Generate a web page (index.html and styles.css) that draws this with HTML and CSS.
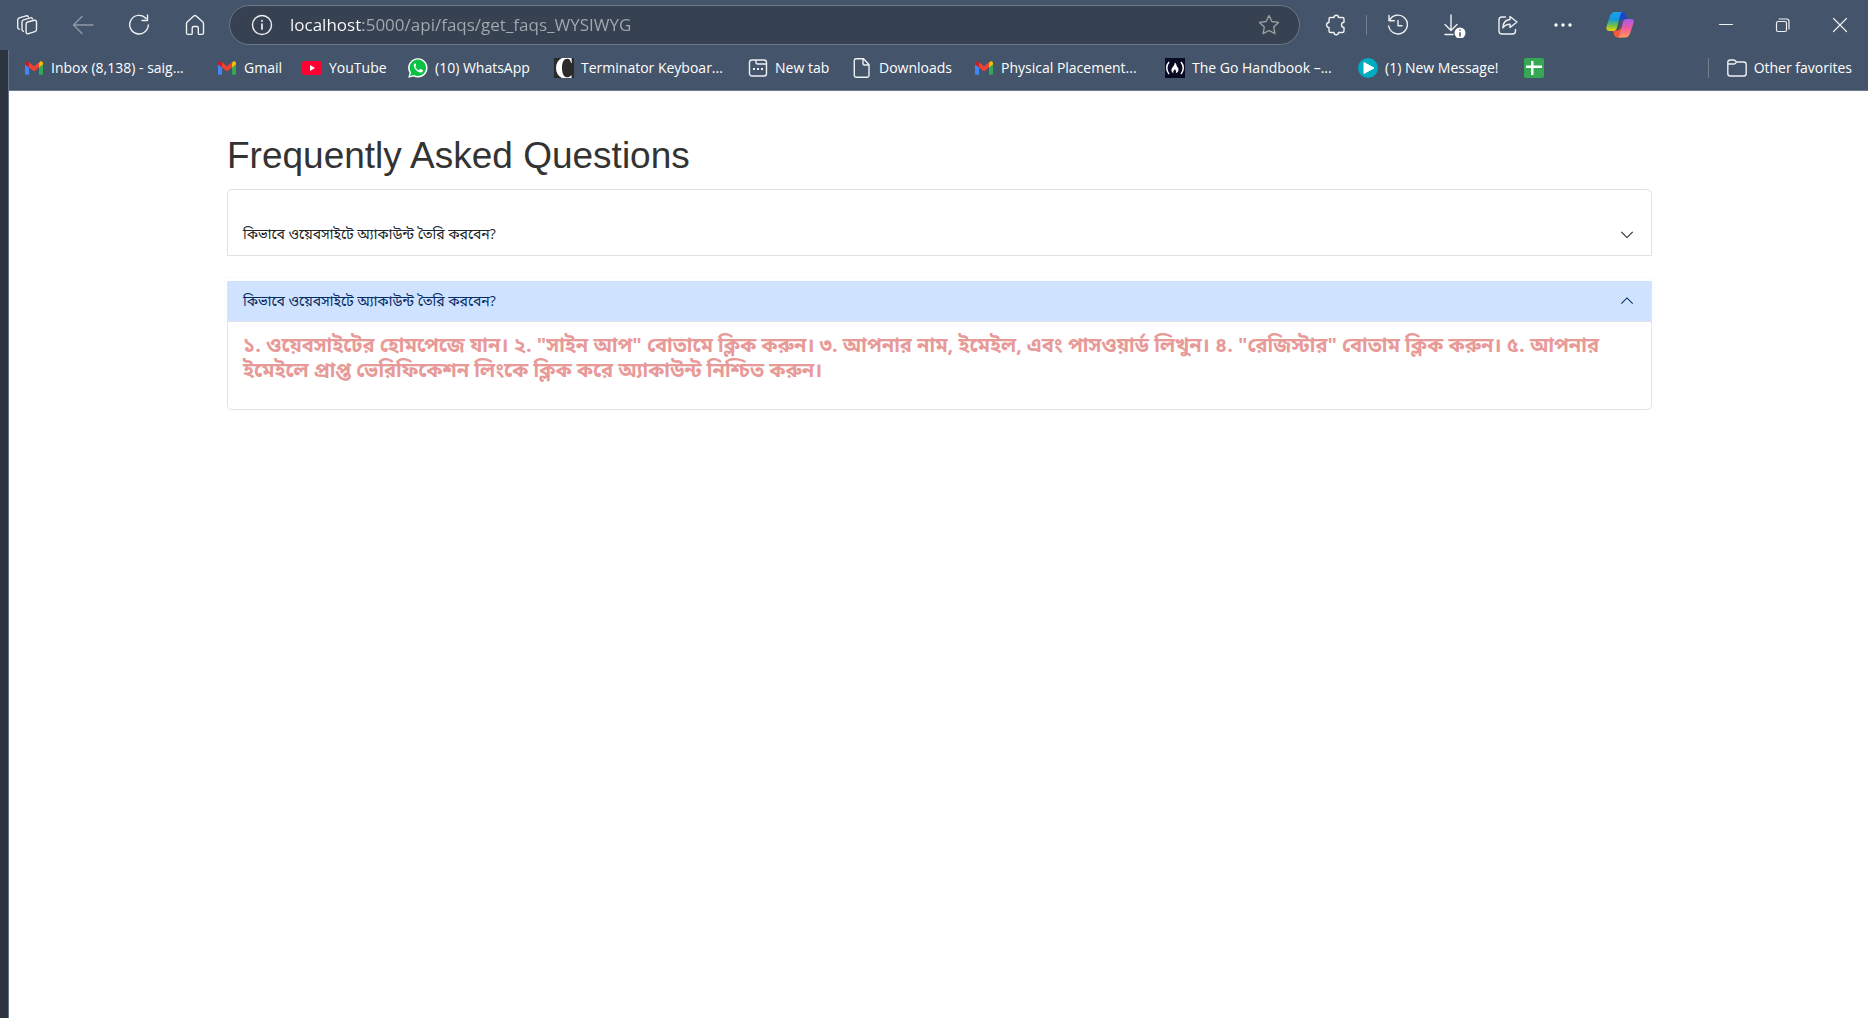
FILE: index.html
```html
<!DOCTYPE html>
<html lang="en">
<head>
<meta charset="utf-8">
<meta name="viewport" content="width=device-width, initial-scale=1">
<title>Frequently Asked Questions</title>
<link rel="stylesheet" href="styles.css">
</head>
<body>
<svg class="defs" aria-hidden="true">
  <symbol id="gmail" viewBox="0 0 20 20">
    <path fill="#4285f4" d="M1 6v9.500c0 .8.500 1.300 1.300 1.300H5V9z"/>
    <path fill="#34a853" d="M19 6v9.500c0 .8-.500 1.300-1.300 1.300H15V9z"/>
    <path fill="#fbbc04" d="M15 5.300V9.500l4-3V5.200c0-1.900-2-2.500-3.200-1.500z"/>
    <path fill="#c5221f" d="M5 5.300V9.500l-4-3V5.200c0-1.900 2-2.500 3.200-1.500z"/>
    <path fill="#ea4335" d="M5 9.500V4.300l5 3.900 5-3.900v5.200l-5 3.900z"/>
  </symbol>
</svg>

<header class="toolbar">
  <nav class="nav" aria-label="Navigation">
    <button class="tool" aria-label="Workspaces"><svg width="24" height="24" viewBox="0 0 24 24"><path d="m12.500 9 6.800-1.700c1.200-.3 2.200.5 2.200 1.700v7.600c0 1-.6 1.800-1.600 2.100l-6.500 2c-1.200.4-2.300-.5-2.300-1.700v-8c0-1 .5-1.800 1.400-2zM8.500 18.300C7.500 18 7 17.500 7 16.500V9c0-1 .6-1.900 1.600-2.200l6.800-1.900c1-.3 1.900.2 2.200 1M4.300 16.300c-1-.3-1.600-.9-1.600-1.900V7c0-1 .6-1.900 1.600-2.200L11 2.900c1-.3 1.900.1 2.300.9"/></svg></button>
    <button class="tool dim" aria-label="Back"><svg width="22" height="22" viewBox="0 0 22 22"><path d="M21 11H2M10 2.500 1.500 11l8.500 8.500"/></svg></button>
    <button class="tool" aria-label="Refresh"><svg width="22" height="22" viewBox="0 0 22 22"><path d="M18 4.500a9.300 9.300 0 1 0 2.300 6.500M19.500 1v5.500h-5.500"/></svg></button>
    <button class="tool" aria-label="Home"><svg width="22" height="22" viewBox="0 0 22 22"><path d="M2.500 9.500c0-.6.300-1.100.7-1.500l6.600-6c.7-.6 1.700-.6 2.400 0l6.600 6c.4.400.7.900.7 1.500V19c0 .8-.6 1.400-1.400 1.400h-2.800c-.6 0-1-.4-1-1V14c0-.9-.6-1.500-1.500-1.500H9.700c-.9 0-1.500.6-1.500 1.500v5.400c0 .6-.4 1-1 1H3.900c-.8 0-1.400-.6-1.400-1.400z"/></svg></button>
  </nav>
  <div class="address">
    <svg width="22" height="22" viewBox="0 0 22 22" aria-hidden="true"><circle cx="11" cy="11" r="9.500"/><path stroke-width="1.700" d="M11 10v5M11 6.500v.6"/></svg>
    <input class="url" type="text" aria-label="Address" value="localhost:5000/api/faqs/get_faqs_WYSIWYG">
    <button class="star" aria-label="Add to favorites"><svg width="22" height="22" viewBox="0 0 22 22"><path d="m11 1.500 2.900 6 6.600.9-4.800 4.600 1.200 6.700-5.900-3.200-5.900 3.200L6.300 13 1.500 8.400l6.600-.9z"/></svg></button>
  </div>
  <div class="actions">
    <button class="tool" aria-label="Extensions"><svg width="22" height="22" viewBox="0 0 22 22"><path d="M5.500 3.500H9c0-3 4.500-3 4.500 0h4c.9 0 1.500.6 1.500 1.500v3.200c-3.300 0-3.300 5.300 0 5.300V17c0 .9-.6 1.500-1.500 1.500h-4c0 3-4.500 3-4.500 0H5.500C4.600 18.500 4 17.900 4 17v-3.500c-3.200 0-3.200-5 0-5V5c0-.9.600-1.500 1.500-1.500z"/></svg></button>
    <span class="rule"></span>
    <button class="tool" aria-label="History"><svg width="22" height="22" viewBox="0 0 22 22"><path d="M2.500 6.500A9.400 9.400 0 1 1 1.700 12M2 1.500v5.300h5.300M11 6.500v5.300h4"/></svg></button>
    <button class="tool" aria-label="Downloads"><svg width="26" height="26" viewBox="0 0 26 26"><path d="M11 3v15.500M5 12.500l6 6 6-6M5 22.500h8"/><circle cx="20" cy="21" r="5.500" fill="#fff" stroke="none"/><path stroke="#44546a" stroke-width="1.500" d="M20 20.800V24M20 18v.3"/></svg></button>
    <button class="tool" aria-label="Share"><svg width="22" height="22" viewBox="0 0 22 22"><path d="M8.500 3H5C3.300 3 2 4.300 2 6v11c0 1.700 1.300 3 3 3h10.500c1.700 0 3-1.300 3-3v-1.500M13 2.500l7 5.500-7 5.500v-3.200c-3.500 0-5.500 1-7.200 3.700C6 9 8.500 5.800 13 5.500z"/></svg></button>
    <button class="tool" aria-label="More"><svg width="22" height="22" viewBox="0 0 22 22"><g fill="#fff" stroke="none"><circle cx="4" cy="11" r="1.700"/><circle cx="11" cy="11" r="1.700"/><circle cx="18" cy="11" r="1.700"/></g></svg></button>
    <button class="tool copilot" aria-label="Copilot"><svg width="28" height="28" viewBox="0 0 28 28">
      <defs>
        <linearGradient id="cpa" x1="0" y1="0" x2="0" y2="1"><stop offset="0" stop-color="#1ba0f5"/><stop offset=".4" stop-color="#1499d8"/><stop offset=".7" stop-color="#6cc04a"/><stop offset="1" stop-color="#f5d000"/></linearGradient>
        <linearGradient id="cpb" x1="0" y1="0" x2="0" y2="1"><stop offset="0" stop-color="#a45bf0"/><stop offset=".5" stop-color="#ee5a9c"/><stop offset="1" stop-color="#ff9a5c"/></linearGradient>
      </defs>
      <path fill="#1448d0" stroke="none" d="M12 1h4.500c2 0 2.800 1.200 3.300 3l1.200 4H17c-2 0-3 1-3.500 3z"/>
      <path fill="#f4593a" stroke="none" d="M16 26.500h-4.500c-2 0-2.800-1-3.300-2.800L7 19.500h4c2 0 3-1 3.500-3z"/>
      <path fill="url(#cpa)" stroke="none" d="M17 1H9C6 1 4.500 3 3.600 6L.5 15.500C-.300 18.500 1 20 3.500 20H7c2.500 0 3.500-1.500 4.200-4L14 5c.6-2.300 1-4 3-4z"/>
      <path fill="url(#cpb)" stroke="none" d="M11.500 26.500H19c3 0 4.500-2 5.400-5l3.100-9.500c.8-3-.5-4-3-4H21c-2.500 0-3.500 1-4.200 3.500L14 22.500c-.6 2.300-1 4-2.500 4z"/>
    </svg></button>
  </div>
  <div class="window">
    <button class="tool" aria-label="Minimize"><svg width="16" height="16" viewBox="0 0 16 16"><path d="M1.500 7.500h13"/></svg></button>
    <button class="tool" aria-label="Restore"><svg width="16" height="16" viewBox="0 0 16 16"><rect x="1.500" y="4.500" width="10" height="10" rx="1.500"/><path d="M4 2h7.500C13 2 14 3 14 4.500V12"/></svg></button>
    <button class="tool" aria-label="Close"><svg width="16" height="16" viewBox="0 0 16 16"><path d="m1.500 1.500 13 13M14.500 1.500l-13 13"/></svg></button>
  </div>
</header>

<div class="frame">
  <div class="pane">
    <nav class="bookmarks" aria-label="Favorites">
      <a href="#"><svg><use href="#gmail"/></svg>Inbox (8,138) - saig...</a>
      <a href="#"><svg><use href="#gmail"/></svg>Gmail</a>
      <a href="#"><svg viewBox="0 0 20 20"><rect y="3" width="20" height="14" rx="3" fill="#f03"/><path fill="#fff" d="m8 7 5 3-5 3z"/></svg>YouTube</a>
      <a href="#"><svg viewBox="0 0 20 20"><path fill="#fff" d="M.2 19.800 1.600 15A9.700 9.700 0 1 1 5.400 18.500z"/><path fill="#09c143" d="m2 18 1.100-3.600A8.200 8.200 0 1 1 6 17z"/><path fill="#fff" d="M7.100 5.300c-.8.300-1.400 1.300-1.300 2.400.3 3 3.400 6.200 6.700 6.800 1.200.1 2.200-.6 2.500-1.500.1-.6 0-.8-.3-1l-2-1c-.4-.2-.6 0-.8.300-.6.8-.8 1-1.300.7-1.500-.7-2.500-1.700-3.200-3-.2-.4.600-.9.800-1.400.1-.3-.6-1.700-.8-2.100-.1-.2-.2-.2-.3-.2z"/></svg>(10) WhatsApp</a>
      <a href="#"><svg viewBox="0 0 20 20"><path fill="#2b2b2b" d="M0 0h20v20H0z"/><path fill="#fff" d="M17.500 0H8C4 2 2 5.500 2 10s2 8 6 10h9.500v-3c-1.300 1.600-2.700 2.300-4 2.300C10 19.300 8 16 8 10S10 .8 13.500.8c1.800 0 3 1.500 3.500 4.200h.8z"/></svg>Terminator Keyboar...</a>
      <a href="#"><svg class="line" viewBox="0 0 20 20"><rect x="1.500" y="2" width="17" height="16" rx="2.500"/><path d="M8 2v2.500C8 5.500 8.500 6 9.500 6h9"/><path stroke-width="2" d="M5 11h2M9 11h2M13 11h2"/></svg>New tab</a>
      <a href="#"><svg class="line" viewBox="0 0 20 20"><path d="M4 .8h7.500L17 6.500v11c0 1-.7 1.700-1.700 1.700H4c-1 0-1.700-.7-1.700-1.700v-15C2.300 1.500 3 .8 4 .8zM11 1v4.500c0 .9.600 1.500 1.500 1.500H17"/></svg>Downloads</a>
      <a href="#"><svg><use href="#gmail"/></svg>Physical Placement...</a>
      <a href="#"><svg viewBox="0 0 20 20"><path fill="#0a0a23" d="M0 0h20v20H0z"/><path fill="none" stroke="#fff" stroke-width="1.500" d="M4 4c-3 3.500-3 8.500 0 12M16 4c3 3.500 3 8.500 0 12"/><path fill="#fff" d="M9.500 4.500c1 3-3.500 5-3 8 .2 1.500 1 2.300 2 2.800-.8-1.800.3-3 1.500-4.300.2 1 .7 1.200 1 2 .3.900.2 1.600-.3 2.300 1.600-.5 2.900-1.800 2.800-3.800-.1-2.200-1-2-1.500-3C11.400 7 11.500 5.500 9.500 4.500z"/></svg>The Go Handbook –...</a>
      <a href="#"><svg viewBox="0 0 20 20"><circle cx="10" cy="10" r="10" fill="#00acc1"/><path fill="#fff" stroke="#fff" stroke-linejoin="round" d="M6 4.500v11l10-5.500z"/></svg>(1) New Message!</a>
      <a href="#" aria-label="Sheet"><svg viewBox="0 0 20 20"><rect width="20" height="20" rx="2" fill="#34a853"/><path fill="#fff" d="M7 3h2.500v4.500H18V10H9.500v7H7v-7H2V7.500h5z"/></svg></a>
      <a href="#" class="other"><svg class="line" viewBox="0 0 20 20"><path d="M.8 4.500c0-1.500 1-2.500 2.500-2.500h3.400c.6 0 1.100.3 1.500.7L9.500 4h7.200c1.500 0 2.500 1 2.500 2.500v9c0 1.500-1 2.500-2.500 2.500H3.300C1.800 18 .8 17 .8 15.500zM1 6h6c.5 0 .9-.3 1.200-.6L9.500 4"/></svg>Other favorites</a>
    </nav>
    <main class="page">
      <div class="container">
        <h1>Frequently Asked Questions</h1>
        <div class="accordion" lang="bn">
          <section class="item">
            <h2><button class="question" aria-expanded="false">কিভাবে ওয়েবসাইটে অ্যাকাউন্ট তৈরি করবেন?<svg width="14" height="14" viewBox="0 0 16 16"><path d="M1.500 4.500 8 11l6.500-6.500"/></svg></button></h2>
          </section>
          <section class="item open">
            <h2><button class="question" aria-expanded="true">কিভাবে ওয়েবসাইটে অ্যাকাউন্ট তৈরি করবেন?<svg width="14" height="14" viewBox="0 0 16 16"><path d="M1.500 11 8 4.500l6.500 6.500"/></svg></button></h2>
            <div class="answer"><strong>১. ওয়েবসাইটের হোমপেজে যান। ২. "সাইন আপ" বোতামে ক্লিক করুন। ৩. আপনার নাম, ইমেইল, এবং পাসওয়ার্ড লিখুন। ৪. "রেজিস্টার" বোতাম ক্লিক করুন। ৫. আপনার ইমেইলে প্রাপ্ত ভেরিফিকেশন লিংকে ক্লিক করে অ্যাকাউন্ট নিশ্চিত করুন।</strong></div>
          </section>
        </div>
      </div>
    </main>
  </div>
</div>
</body>
</html>
```
FILE: styles.css
```css
* { box-sizing: border-box; }

body {
  margin: 0;
  min-height: 100vh;
  display: flex;
  flex-direction: column;
  background: #2b343f;
  font-family: "Open Sans", "Noto Sans", sans-serif;
}

button {
  margin: 0;
  padding: 0;
  border: 0;
  background: none;
  color: inherit;
  font: inherit;
}

.defs { display: none; }

/* Browser toolbar */
.toolbar {
  display: flex;
  align-items: center;
  height: 50px;
  background: #44546a;
}

.toolbar svg {
  fill: none;
  stroke: #eef0f3;
  stroke-width: 1.4;
  stroke-linecap: round;
  stroke-linejoin: round;
}

.nav { display: flex; gap: 2px; margin-right: 7px; }

.tool {
  display: flex;
  align-items: center;
  justify-content: center;
  width: 54px;
  height: 40px;
}

.toolbar .dim svg { stroke: #8f99a6; }

.address {
  display: flex;
  flex: 1;
  align-items: center;
  gap: 17px;
  height: 40px;
  padding: 0 19px 0 21px;
  border: 1px solid #6c7888;
  border-radius: 20px;
  background: #364252;
}

.url {
  flex: 1;
  min-width: 0;
  padding: 0;
  border: 0;
  outline: 0;
  background: linear-gradient(to right, #fff 73px, #a4a9b0 73px);
  background-clip: text;
  -webkit-background-clip: text;
  color: transparent;
  font: 17px/24px "Open Sans", "Noto Sans", sans-serif;
}

.star { display: flex; }
.toolbar .star svg { stroke: #9c9d9f; }

.actions { display: flex; align-items: center; margin: 0 47px 0 8px; }
.actions .tool { width: 55px; }
.actions .copilot { width: 60px; }

.rule { width: 1px; height: 20px; margin: 0 3px; background: #75808e; }

.window { display: flex; }
.window .tool { width: 57px; }
.window svg { stroke-width: 1.2; }

/* Window frame */
.frame {
  display: flex;
  flex: 1;
  padding-left: 8px;
}

.pane {
  display: flex;
  flex: 1;
  flex-direction: column;
  min-width: 0;
  border-left: 1px solid #65738a;
  background: #fff;
}

.bookmarks {
  display: grid;
  grid-template-columns: 193px 85px 106px 146px 194px 104px 122px 191px 193px 166px 20px 1fr;
  align-items: center;
  height: 41px;
  padding: 0 16px 5px 15px;
  border-bottom: 1px solid #6b7889;
  background: #44546a;
}

.bookmarks a {
  display: flex;
  align-items: center;
  gap: 7px;
  color: #fff;
  font-size: 14px;
  line-height: 20px;
  text-decoration: none;
  white-space: nowrap;
}

.bookmarks svg { flex: none; width: 20px; height: 20px; }

.bookmarks .line {
  fill: none;
  stroke: #eef0f3;
  stroke-width: 1.4;
}

.bookmarks .other {
  justify-self: end;
  padding-left: 18px;
  border-left: 1px solid #75808e;
}

/* FAQ page */
.page {
  flex: 1;
  padding: 40px 0 0 2px;
}

.container {
  width: 77%;
  max-width: 1425px;
  margin: 0 auto;
}

h1 {
  margin: 0 0 8px;
  color: #333;
  font: 400 37px/50px "Liberation Sans", Arial, sans-serif;
}

.accordion { font-family: "Open Sans", "Noto Sans Bengali", sans-serif; }

.item {
  border: 1px solid #dee2e6;
}

.item h2 { margin: 0; font-size: 14px; font-weight: 400; }
.item:first-child { padding-top: 24px; border-radius: 5px 5px 0 0; }

.item:last-child {
  margin-top: 25px;
  border-top: 0;
  border-radius: 0 0 5px 5px;
}

.question {
  display: flex;
  align-items: center;
  justify-content: space-between;
  width: 100%;
  height: 41px;
  padding: 0 17px 0 15px;
  color: #212529;
  text-align: left;
}

.question svg { fill: none; stroke: currentColor; stroke-width: 1.2; }

.open .question {
  background: #cfe2ff;
  color: #052c65;
  border-bottom: 1px solid #dee2e6;
  outline: 1px solid #fafbfe;
  outline-offset: 3px;
}

.answer {
  padding: 10px 15px 27px;
  color: #e89a98;
  font-size: 20px;
  line-height: 25px;
}
```
